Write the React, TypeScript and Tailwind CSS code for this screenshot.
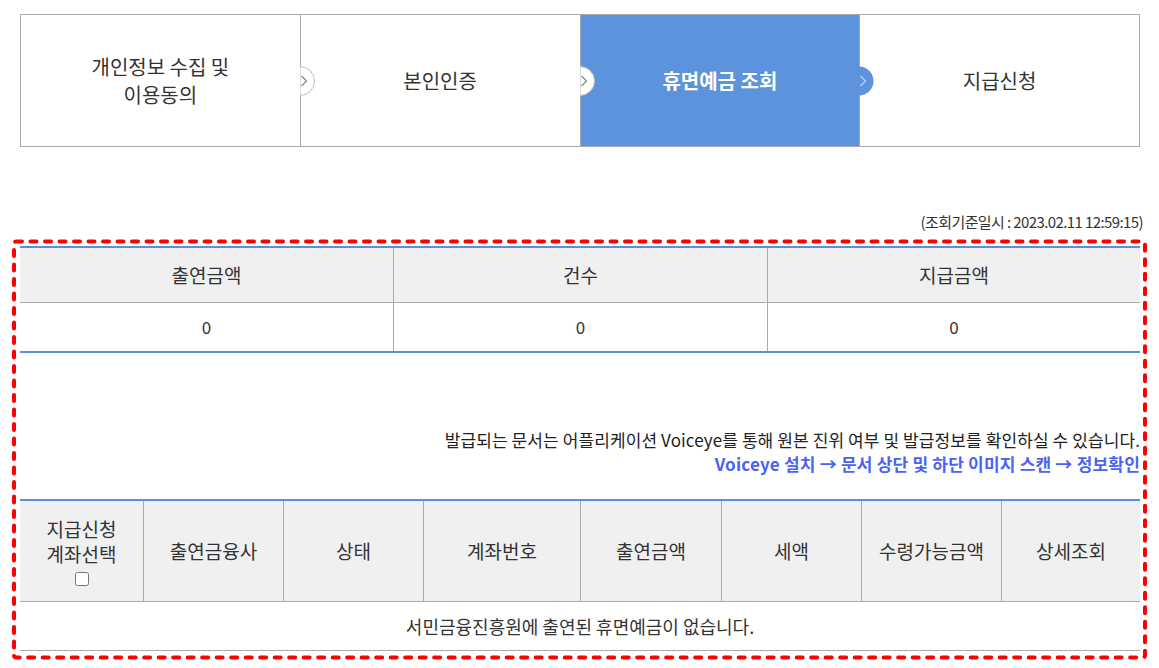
import React from "react";

const steps = [
  { label: ["개인정보 수집 및", "이용동의"], active: false },
  { label: ["본인인증"], active: false },
  { label: ["휴면예금 조회"], active: true },
  { label: ["지급신청"], active: false },
];

const cols = [
  { w: "w-[123px]", label: "" },
  { w: "w-[140px]", label: "출연금융사" },
  { w: "w-[140px]", label: "상태" },
  { w: "w-[157px]", label: "계좌번호" },
  { w: "w-[141px]", label: "출연금액" },
  { w: "w-[140px]", label: "세액" },
  { w: "w-[140px]", label: "수령가능금액" },
  { w: "w-[139px]", label: "상세조회" },
];

function StepArrow({ active }: { active: boolean }) {
  return (
    <svg
      className="absolute left-full top-1/2 -translate-y-1/2 z-10"
      width="16"
      height="30"
      viewBox="0 0 16 30"
    >
      <path
        d="M0 0.5 A14.5 14.5 0 0 1 0 29.5 Z"
        fill={active ? "#5c93dc" : "#ffffff"}
        stroke={active ? "none" : "#bdbdbd"}
        strokeWidth="1"
      />
      <path
        d="M1.5 10 L6.5 15 L1.5 20"
        fill="none"
        stroke={active ? "#b9d1f3" : "#8a8a8a"}
        strokeWidth="1.3"
      />
    </svg>
  );
}

export default function App() {
  return (
    <div className="min-h-screen bg-white pl-[20px] pt-[14px] text-[#333] font-['Noto_Sans_CJK_KR',sans-serif]">
      <div className="w-[1120px]">
        {/* step bar */}
        <div className="flex h-[133px] border border-[#aaa]">
          {steps.map((s, i) => (
            <div
              key={i}
              className={`relative flex flex-1 flex-col items-center justify-center text-[20px] leading-[28px] ${
                i > 0 ? "border-l border-[#aaa]" : ""
              } ${s.active ? "bg-[#5c93dc] text-white font-bold" : "text-[#333]"}`}
            >
              {s.label.map((l) => (
                <div key={l}>{l}</div>
              ))}
              {i < steps.length - 1 && <StepArrow active={s.active} />}
            </div>
          ))}
        </div>

        <div className="mt-[65px] -mr-[3px] text-right text-[15px] leading-[20px] tracking-[-0.6px] text-[#333]">
          (조회기준일시 : 2023.02.11 12:59:15)
        </div>

        <div className="relative mt-[14px]">
          <svg
            className="absolute -left-[8px] -top-[7px] pointer-events-none"
            width="1135"
            height="421"
            viewBox="0 0 1135 421"
          >
            <rect
              x="2"
              y="2.5"
              width="1131"
              height="416"
              rx="2"
              fill="none"
              stroke="#ff0000"
              strokeWidth="4"
              strokeDasharray="6 8.5"
              strokeLinecap="round"
            />
          </svg>

          {/* summary */}
          <div className="border-t-2 border-b-2 border-[#5b8fd6]">
            <div className="grid grid-cols-[373px_374px_373px] h-[55px] bg-[#f0f0f0] border-b border-[#aaa] text-[19px]">
              <div className="flex items-center justify-center">출연금액</div>
              <div className="flex items-center justify-center border-l border-[#aaa]">건수</div>
              <div className="flex items-center justify-center border-l border-[#aaa]">지급금액</div>
            </div>
            <div className="grid grid-cols-[373px_374px_373px] h-[48px] text-[17px]">
              <div className="flex items-center justify-center">0</div>
              <div className="flex items-center justify-center border-l border-[#aaa]">0</div>
              <div className="flex items-center justify-center border-l border-[#aaa]">0</div>
            </div>
          </div>

          <div className="pt-[75px] pb-[23px] text-right text-[17px] leading-[24px]">
            <div className="text-[#222] tracking-[0.1px]">
              발급되는 문서는 어플리케이션 Voiceye를 통해 원본 진위 여부 및 발급정보를 확인하실 수 있습니다.
            </div>
            <div className="font-bold text-[#4b63f2] tracking-[0.2px]">
              Voiceye 설치 → 문서 상단 및 하단 이미지 스캔 → 정보확인
            </div>
          </div>

          {/* list */}
          <div className="border-t-2 border-[#5b8fd6] border-b border-b-[#aaa]">
            <div className="flex h-[101px] bg-[#f0f0f0] border-b border-[#aaa] text-[19px]">
              {cols.map((c, i) => (
                <div
                  key={i}
                  className={`${c.w} shrink-0 flex flex-col items-center justify-center ${
                    i > 0 ? "border-l border-[#aaa]" : ""
                  }`}
                >
                  {i === 0 ? (
                    <>
                      <div className="leading-[25px]">지급신청</div>
                      <div className="leading-[25px]">계좌선택</div>
                      <input type="checkbox" readOnly className="mt-[6px] w-[14px] h-[14px]" />
                    </>
                  ) : (
                    c.label
                  )}
                </div>
              ))}
            </div>
            <div className="flex h-[48px] items-center justify-center text-[18px]">
              서민금융진흥원에 출연된 휴면예금이 없습니다.
            </div>
          </div>
        </div>
      </div>
    </div>
  );
}
